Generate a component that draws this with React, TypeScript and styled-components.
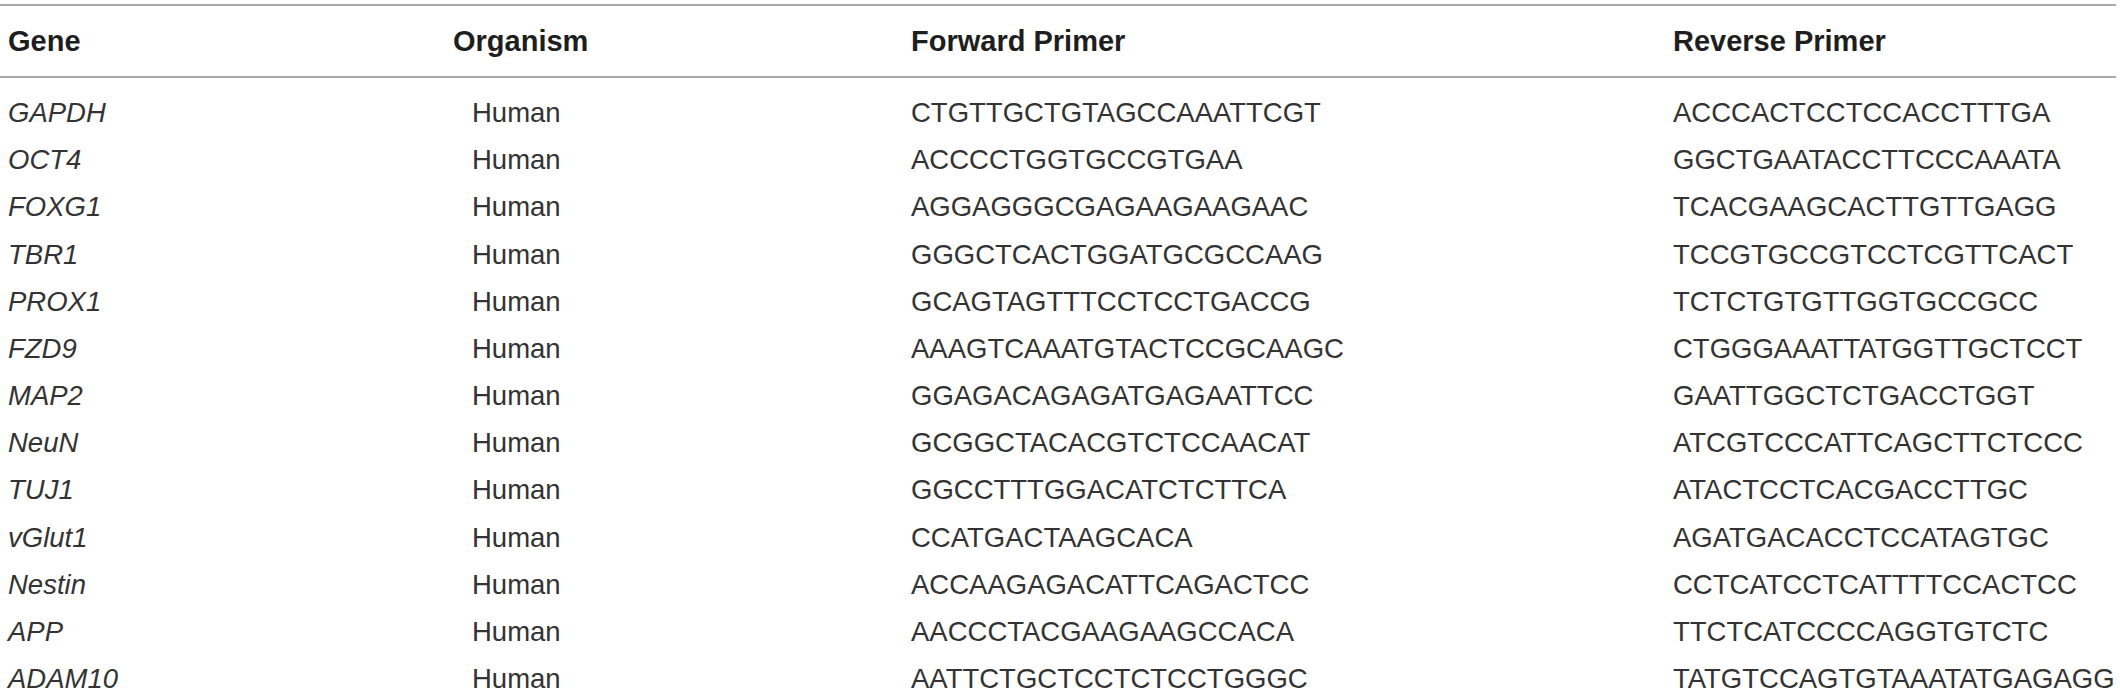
import styled, { createGlobalStyle } from 'styled-components'

const rows = [
  ['GAPDH', 'Human', 'CTGTTGCTGTAGCCAAATTCGT', 'ACCCACTCCTCCACCTTTGA'],
  ['OCT4', 'Human', 'ACCCCTGGTGCCGTGAA', 'GGCTGAATACCTTCCCAAATA'],
  ['FOXG1', 'Human', 'AGGAGGGCGAGAAGAAGAAC', 'TCACGAAGCACTTGTTGAGG'],
  ['TBR1', 'Human', 'GGGCTCACTGGATGCGCCAAG', 'TCCGTGCCGTCCTCGTTCACT'],
  ['PROX1', 'Human', 'GCAGTAGTTTCCTCCTGACCG', 'TCTCTGTGTTGGTGCCGCC'],
  ['FZD9', 'Human', 'AAAGTCAAATGTACTCCGCAAGC', 'CTGGGAAATTATGGTTGCTCCT'],
  ['MAP2', 'Human', 'GGAGACAGAGATGAGAATTCC', 'GAATTGGCTCTGACCTGGT'],
  ['NeuN', 'Human', 'GCGGCTACACGTCTCCAACAT', 'ATCGTCCCATTCAGCTTCTCCC'],
  ['TUJ1', 'Human', 'GGCCTTTGGACATCTCTTCA', 'ATACTCCTCACGACCTTGC'],
  ['vGlut1', 'Human', 'CCATGACTAAGCACA', 'AGATGACACCTCCATAGTGC'],
  ['Nestin', 'Human', 'ACCAAGAGACATTCAGACTCC', 'CCTCATCCTCATTTTCCACTCC'],
  ['APP', 'Human', 'AACCCTACGAAGAAGCCACA', 'TTCTCATCCCCAGGTGTCTC'],
  ['ADAM10', 'Human', 'AATTCTGCTCCTCTCCTGGGC', 'TATGTCCAGTGTAAATATGAGAGG'],
]

export default function App() {
  return (
    <>
      <GlobalStyle />
      <PrimerTable>
        <colgroup>
          <col style={{ width: 445 }} />
          <col style={{ width: 458 }} />
          <col style={{ width: 762 }} />
          <col style={{ width: 451 }} />
        </colgroup>
        <thead>
          <tr>
            <HeadCell>Gene</HeadCell>
            <HeadCell>Organism</HeadCell>
            <HeadCell>Forward Primer</HeadCell>
            <HeadCell>Reverse Primer</HeadCell>
          </tr>
        </thead>
        <tbody>
          {rows.map(([gene, organism, fwd, rev]) => (
            <Row key={gene}>
              <GeneCell>{gene}</GeneCell>
              <OrganismCell>{organism}</OrganismCell>
              <Cell>{fwd}</Cell>
              <Cell>{rev}</Cell>
            </Row>
          ))}
        </tbody>
      </PrimerTable>
    </>
  )
}

const GlobalStyle = createGlobalStyle`
  body {
    margin: 0;
    background: #fff;
    font-family: 'Liberation Sans', Arial, sans-serif;
  }
`
const PrimerTable = styled.table`
  width: 2116px;
  margin-top: 4px;
  table-layout: fixed;
  border-collapse: collapse;
  border-top: 2px solid #ababab;
`
const HeadCell = styled.th`
  height: 70px;
  padding: 0 0 0 8px;
  text-align: left;
  vertical-align: middle;
  font-size: 29px;
  font-weight: 700;
  color: #1e1e1e;
  border-bottom: 2px solid #ababab;
`
const Row = styled.tr`
  &:first-child td {
    padding-top: 11px;
  }
`
const Cell = styled.td`
  padding: 0 0 0 8px;
  height: 47.17px;
  line-height: 47.17px;
  font-size: 27.5px;
  font-weight: 400;
  color: #333;
  white-space: nowrap;
  vertical-align: top;
`
const GeneCell = styled(Cell)`
  font-style: italic;
`
const OrganismCell = styled(Cell)`
  padding-left: 27px;
`
